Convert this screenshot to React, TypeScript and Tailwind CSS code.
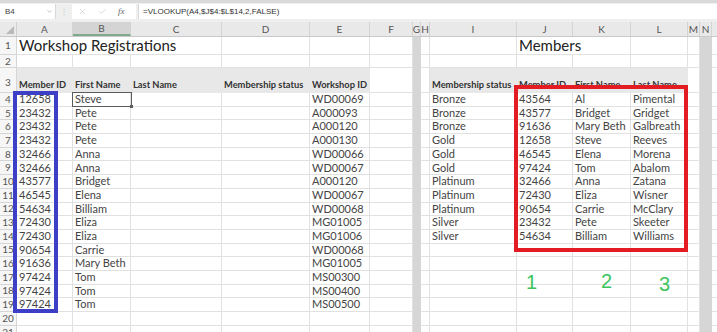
import { X, Check, ChevronDown } from "lucide-react";
import type { ReactNode } from "react";

type Col = { id: string; w: string; gray?: boolean; label?: string };

const COLS: Col[] = [
  { id: "A", w: "w-[56px]" },
  { id: "B", w: "w-[58px]" },
  { id: "C", w: "w-[91px]" },
  { id: "D", w: "w-[88px]" },
  { id: "E", w: "w-[60px]" },
  { id: "F", w: "w-[43px]" },
  { id: "G", w: "w-[8px]", gray: true },
  { id: "H", w: "w-[9px]" },
  { id: "I", w: "w-[87px]" },
  { id: "J", w: "w-[56px]" },
  { id: "K", w: "w-[58px]" },
  { id: "L", w: "w-[57px]" },
  { id: "M", w: "w-[12px]" },
  { id: "N", w: "w-[12px]", gray: true },
  { id: "O", w: "w-[40px]", label: "" },
];

const registrations: [string, string, string][] = [
  ["12658", "Steve", "WD00069"],
  ["23432", "Pete", "A000093"],
  ["23432", "Pete", "A000120"],
  ["23432", "Pete", "A000130"],
  ["32466", "Anna", "WD00066"],
  ["32466", "Anna", "WD00067"],
  ["43577", "Bridget", "A000120"],
  ["46545", "Elena", "WD00067"],
  ["54634", "Billiam", "WD00068"],
  ["72430", "Eliza", "MG01005"],
  ["72430", "Eliza", "MG01006"],
  ["90654", "Carrie", "WD00068"],
  ["91636", "Mary Beth", "MG01005"],
  ["97424", "Tom", "MS00300"],
  ["97424", "Tom", "MS00400"],
  ["97424", "Tom", "MS00500"],
];

const members: [string, string, string, string][] = [
  ["Bronze", "43564", "Al", "Pimental"],
  ["Bronze", "43577", "Bridget", "Gridget"],
  ["Bronze", "91636", "Mary Beth", "Galbreath"],
  ["Gold", "12658", "Steve", "Reeves"],
  ["Gold", "46545", "Elena", "Morena"],
  ["Gold", "97424", "Tom", "Abalom"],
  ["Platinum", "32466", "Anna", "Zatana"],
  ["Platinum", "72430", "Eliza", "Wisner"],
  ["Platinum", "90654", "Carrie", "McClary"],
  ["Silver", "23432", "Pete", "Skeeter"],
  ["Silver", "54634", "Billiam", "Williams"],
];

const headers: Record<string, string> = {
  A: "Member ID",
  B: "First Name",
  C: "Last Name",
  D: "Membership status",
  E: "Workshop ID",
  I: "Membership status",
  J: "Member ID",
  K: "First Name",
  L: "Last Name",
};

const bandCols = ["A", "B", "C", "D", "E", "I", "J", "K", "L"];

function rowData(n: number): Record<string, ReactNode> {
  const d: Record<string, ReactNode> = {};
  if (n === 1) {
    d.A = <span className="text-[15px] text-[#222]">Workshop Registrations</span>;
    d.J = <span className="text-[15px] text-[#222]">Members</span>;
  }
  if (n === 3) {
    for (const k of Object.keys(headers)) d[k] = headers[k];
  }
  const r = registrations[n - 4];
  if (r) {
    d.A = r[0];
    d.B = r[1];
    d.E = r[2];
  }
  const m = members[n - 4];
  if (m) {
    d.I = m[0];
    d.J = m[1];
    d.K = m[2];
    d.L = m[3];
  }
  return d;
}

function SheetRow({ n, h }: { n: number; h: string }) {
  const data = rowData(n);
  const band = n === 3;
  return (
    <div className={`flex ${h}`}>
      <div
        className={`w-[17px] shrink-0 flex justify-center border-r border-b border-[#d5d5d5] bg-[#f6f6f6] text-[10px] text-[#555] ${
          band ? "items-end pb-[2px]" : "items-center"
        }`}
      >
        {n}
      </div>
      {COLS.map((c) => {
        const v = data[c.id];
        if (c.gray) {
          return <div key={c.id} className={`${c.w} shrink-0 bg-[#d6d6d6]`} />;
        }
        if (band && bandCols.includes(c.id)) {
          return (
            <div
              key={c.id}
              className={`${c.w} shrink-0 bg-[#e8e8e8] flex items-end pb-[1px] pl-[2px] overflow-hidden whitespace-nowrap text-[9.3px] font-bold text-[#333]`}
            >
              {v}
            </div>
          );
        }
        const noRight = n === 1 && (c.id === "A" || c.id === "B" || c.id === "J");
        return (
          <div
            key={c.id}
            className={`${c.w} shrink-0 flex items-center pl-[2px] whitespace-nowrap text-[11px] text-[#444] border-b border-[#e1e1e1] ${
              noRight ? "overflow-visible" : "border-r overflow-hidden"
            }`}
          >
            {v}
          </div>
        );
      })}
    </div>
  );
}

export default function App() {
  const bodyRows = Array.from({ length: 18 }, (_, i) => i + 4);

  return (
    <div className="relative w-[717px] h-[332px] overflow-hidden bg-white font-['Lato',sans-serif]">
      {/* formula bar */}
      <div className="h-[22px] flex flex-col bg-[#efefef]">
        <div className="h-[3px] bg-[#dadada]" />
        <div className="h-[15px] mt-[1px] flex items-center font-['Liberation_Sans',sans-serif]">
          <div className="w-[56px] h-full bg-white border-r border-[#d8d8d8] flex items-center justify-between pl-[5px] pr-[2px] text-[8px] text-[#444]">
            B4
            <ChevronDown className="w-[7px] h-[7px] text-[#999]" />
          </div>
          <div className="w-[16px] h-full flex items-center justify-center text-[8px] text-[#bbb]">⋮</div>
          <div className="w-[64px] h-full bg-white flex items-center gap-[11px] pl-[6px]">
            <X className="w-[9px] h-[9px] text-[#c3c3c3]" strokeWidth={1.5} />
            <Check className="w-[9px] h-[9px] text-[#c3c3c3]" strokeWidth={1.5} />
            <span className="italic font-['Liberation_Serif',serif] text-[9px] text-[#666]">fx</span>
          </div>
          <div className="flex-1 h-full bg-white border-l border-[#d8d8d8] ml-[2px] flex items-center pl-[4px] text-[8px] text-[#333]">
            =VLOOKUP(A4,$J$4:$L$14,2,FALSE)
          </div>
        </div>
      </div>

      {/* column headers */}
      <div className="flex h-[15px] bg-[#e9e9e9] border-b border-[#c9c9c9] text-[10px] text-[#555]">
        <div className="w-[17px] shrink-0 border-r border-[#d0d0d0] flex items-end justify-end p-[2px]">
          <svg width="8" height="8" viewBox="0 0 8 8">
            <path d="M8 0 L8 8 L0 8 Z" fill="#b9b9b9" />
          </svg>
        </div>
        {COLS.map((c) => (
          <div
            key={c.id}
            className={`${c.w} shrink-0 flex items-center justify-center border-r border-[#d3d3d3] ${
              c.id === "B" ? "bg-[#d4d4d4] border-b-2 border-b-[#7fa88c]" : ""
            }`}
          >
            {c.label ?? c.id}
          </div>
        ))}
      </div>

      {/* grid */}
      <SheetRow n={1} h="h-[18px]" />
      <SheetRow n={2} h="h-[13px]" />
      <SheetRow n={3} h="h-[25px]" />
      {bodyRows.map((n) => (
        <SheetRow key={n} n={n} h="h-[13.7px]" />
      ))}

      {/* active cell B4 */}
      <div className="absolute left-[72px] top-[92px] w-[60px] h-[15px] border border-[#5c5c5c]">
        <div className="absolute -right-[2px] -bottom-[2px] w-[3px] h-[3px] bg-[#5c5c5c]" />
      </div>

      {/* annotations */}
      <div className="absolute left-[13px] top-[91px] w-[45px] h-[222px] border-4 border-[#3d40c6]" />
      <div className="absolute left-[514px] top-[85px] w-[174px] h-[167px] border-4 border-[#e31c24]" />
      <span className="absolute left-[526px] top-[272px] text-[20px] leading-none text-[#3cc45c] font-['Liberation_Sans',sans-serif]">1</span>
      <span className="absolute left-[601px] top-[271px] text-[20px] leading-none text-[#3cc45c] font-['Liberation_Sans',sans-serif]">2</span>
      <span className="absolute left-[659px] top-[274px] text-[20px] leading-none text-[#3cc45c] font-['Liberation_Sans',sans-serif]">3</span>
    </div>
  );
}
